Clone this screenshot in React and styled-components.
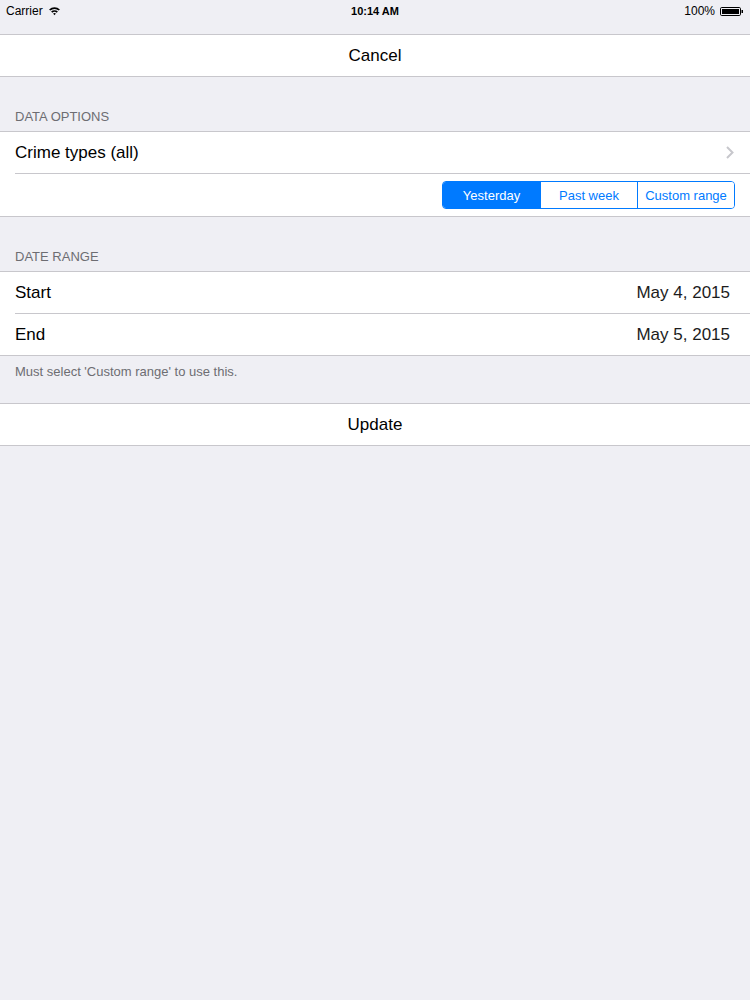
import React, { useState } from 'react';
import styled, { createGlobalStyle } from 'styled-components';

const GlobalStyle = createGlobalStyle`
  html, body {
    margin: 0;
    padding: 0;
    background: #efeff4;
  }
  body {
    font-family: "Liberation Sans", Arial, sans-serif;
    -webkit-font-smoothing: antialiased;
  }
`;

const Page = styled.div`
  width: 750px;
  min-height: 1000px;
  background: #efeff4;
  display: flex;
  flex-direction: column;
`;

const StatusBar = styled.div`
  height: 34px;
  display: grid;
  grid-template-columns: 1fr auto 1fr;
  align-items: start;
  padding: 0 6px;
  font-size: 12px;
  color: #000;
  line-height: 22px;
`;

const StatusLeft = styled.div`
  display: flex;
  align-items: center;
  gap: 5px;
`;

const StatusCenter = styled.div`
  font-weight: bold;
  font-size: 11px;
`;

const StatusRight = styled.div`
  display: flex;
  align-items: center;
  justify-content: flex-end;
  gap: 5px;
`;

const Group = styled.div`
  background: #fff;
  border-top: 1px solid #c8c7cc;
  border-bottom: 1px solid #c8c7cc;
`;

const Row = styled.div`
  height: ${({ $tall }) => ($tall ? 42 : 41)}px;
  display: flex;
  align-items: center;
  justify-content: space-between;
  padding: 0 ${({ $pr }) => $pr ?? 20}px 0 15px;
  font-size: 17px;
  color: #000;
  & + & {
    border-top: 1px solid #c8c7cc;
    margin-left: 15px;
    padding-left: 0;
  }
`;

const ButtonRow = styled.div`
  height: 41px;
  display: flex;
  align-items: center;
  justify-content: center;
  font-size: 17px;
  color: #000;
`;

const Detail = styled.span`
  color: #1c1c1c;
`;

const SectionHeader = styled.div`
  height: 54px;
  box-sizing: border-box;
  display: flex;
  align-items: flex-end;
  padding: 0 15px 6px;
  font-size: 13px;
  line-height: 16px;
  color: #6d6d72;
  text-transform: uppercase;
`;

const SectionFooter = styled.div`
  height: 47px;
  box-sizing: border-box;
  padding: 8px 15px 0;
  font-size: 13px;
  line-height: 16px;
  color: #6d6d72;
`;

const Segmented = styled.div`
  display: flex;
  margin-left: auto;
  border: 1px solid #007aff;
  border-radius: 4px;
  overflow: hidden;
  height: 26px;
`;

const Segment = styled.button`
  width: 97px;
  border: none;
  padding: 0;
  font-family: inherit;
  font-size: 13px;
  background: ${({ $active }) => ($active ? '#007aff' : '#fff')};
  color: ${({ $active }) => ($active ? '#fff' : '#007aff')};
  & + & {
    border-left: 1px solid #007aff;
  }
`;

const Wifi = () => (
  <svg width="13" height="10" viewBox="0 0 12 10">
    <path d="M0.6 3.4 A7.8 7.8 0 0 1 11.4 3.4 L10.2 4.6 A6.1 6.1 0 0 0 1.8 4.6 Z" fill="#000" />
    <path d="M2.6 5.5 A4.9 4.9 0 0 1 9.4 5.5 L8.2 6.7 A3.2 3.2 0 0 0 3.8 6.7 Z" fill="#000" />
    <path d="M4.6 7.6 A2 2 0 0 1 7.4 7.6 L6 9.2 Z" fill="#000" />
  </svg>
);

const Battery = () => (
  <svg width="24" height="9" viewBox="0 0 24 9">
    <rect x="0.5" y="0.5" width="20" height="8" rx="1.2" fill="none" stroke="#000" />
    <rect x="2" y="2" width="17" height="5" fill="#000" />
    <rect x="21.5" y="3" width="1.5" height="3" fill="#000" />
  </svg>
);

const Chevron = () => (
  <svg width="8" height="13" viewBox="0 0 8 13">
    <path d="M1 1 L6.5 6.5 L1 12" fill="none" stroke="#c7c7cc" strokeWidth="2" />
  </svg>
);

const ranges = ['Yesterday', 'Past week', 'Custom range'];

export default function App() {
  const [range, setRange] = useState(0);

  return (
    <Page>
      <GlobalStyle />
      <StatusBar>
        <StatusLeft>
          Carrier <Wifi />
        </StatusLeft>
        <StatusCenter>10:14 AM</StatusCenter>
        <StatusRight>
          100% <Battery />
        </StatusRight>
      </StatusBar>

      <Group>
        <ButtonRow>Cancel</ButtonRow>
      </Group>

      <SectionHeader>Data Options</SectionHeader>
      <Group>
        <Row $pr={16}>
          Crime types (all)
          <Chevron />
        </Row>
        <Row $tall $pr={15}>
          <Segmented>
            {ranges.map((r, i) => (
              <Segment key={r} $active={range === i} onClick={() => setRange(i)}>
                {r}
              </Segment>
            ))}
          </Segmented>
        </Row>
      </Group>

      <SectionHeader>Date Range</SectionHeader>
      <Group>
        <Row>
          Start
          <Detail>May 4, 2015</Detail>
        </Row>
        <Row>
          End
          <Detail>May 5, 2015</Detail>
        </Row>
      </Group>
      <SectionFooter>Must select 'Custom range' to use this.</SectionFooter>

      <Group>
        <ButtonRow>Update</ButtonRow>
      </Group>
    </Page>
  );
}
